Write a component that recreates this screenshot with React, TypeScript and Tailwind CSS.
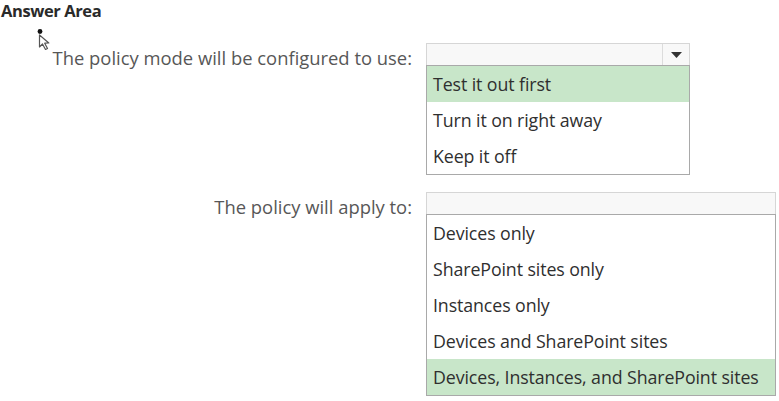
import React from 'react'

const font = { fontFamily: '"Open Sans", "Noto Sans", Arial, sans-serif' }

function Cursor() {
  return (
    <svg width="18" height="24" viewBox="0 0 18 24" className="absolute left-[35px] top-[27px]">
      <circle cx="5" cy="4.5" r="2.4" fill="#111" />
      <path d="M4.5 8 L4.5 20 L7.5 17 L10.5 22.5 L12.5 21.5 L9.7 16.2 L13.8 16 Z" fill="#fff" stroke="#555" strokeWidth="1.2" strokeLinejoin="round" />
    </svg>
  )
}

function Dropdown({ items, selected, width, arrow }: { items: string[]; selected: number; width: string; arrow?: boolean }) {
  return (
    <div className={width}>
      <div className="h-[23px] flex border border-[#d6d6d6] bg-[#f8f8f8]">
        <div className="flex-1" />
        {arrow && (
          <div className="w-[27px] border-l border-[#dcdcdc] flex items-center justify-center">
            <svg width="11" height="6" viewBox="0 0 11 6">
              <path d="M0 0 H11 L5.5 6 Z" fill="#333" />
            </svg>
          </div>
        )}
      </div>
      <div className="border border-[#a9a9a9] -mt-px bg-white">
        {items.map((it, i) => (
          <div
            key={it}
            className={`h-[36px] flex items-center pl-[6px] text-[17.8px] tracking-[-0.1px] text-[#2f2f2f] ${i === selected ? 'bg-[#c8e6c9]' : ''}`}
          >
            {it}
          </div>
        ))}
      </div>
    </div>
  )
}

export default function App() {
  return (
    <div className="relative w-[779px] h-[401px] overflow-hidden bg-white" style={font}>
      {/* Title */}
      <div className="pl-[1px] h-[22px] leading-[22px] text-[16.5px] font-bold text-[#2a2a2a] tracking-[-0.4px]">Answer Area</div>
      <Cursor />

      {/* Question 1 */}
      <div className="flex mt-[21px]">
        <div className="w-[412px] text-right pt-[1px] text-[18.4px] text-[#575757]">The policy mode will be configured to use:</div>
        <div className="ml-[14px]">
          <Dropdown
            width="w-[264px]"
            arrow
            selected={0}
            items={['Test it out first', 'Turn it on right away', 'Keep it off']}
          />
        </div>
      </div>

      {/* Question 2 */}
      <div className="flex mt-[17px]">
        <div className="w-[412px] text-right pt-[1px] text-[18.4px] text-[#575757]">The policy will apply to:</div>
        <div className="ml-[14px]">
          <Dropdown
            width="w-[350px]"
            selected={4}
            items={[
              'Devices only',
              'SharePoint sites only',
              'Instances only',
              'Devices and SharePoint sites',
              'Devices, Instances, and SharePoint sites',
            ]}
          />
        </div>
      </div>
    </div>
  )
}
